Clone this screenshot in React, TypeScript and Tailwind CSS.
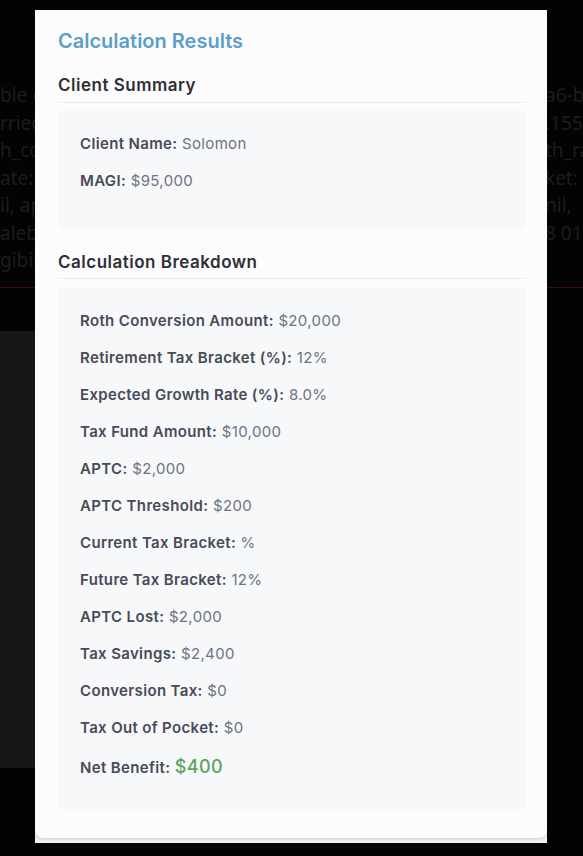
import React from "react";

const bgLines: [string, string][] = [
  ["ble of", "a6-b"],
  ["rried", ".1555"],
  ["h_co", "th_ra"],
  ["ate: ", "ket: r"],
  ["il, ap", " nil,"],
  ["aleb'", "8 01"],
  ["gibili", ""],
];

const summary = [
  { label: "Client Name", value: "Solomon" },
  { label: "MAGI", value: "$95,000" },
];

const breakdown = [
  { label: "Roth Conversion Amount", value: "$20,000" },
  { label: "Retirement Tax Bracket (%)", value: "12%" },
  { label: "Expected Growth Rate (%)", value: "8.0%" },
  { label: "Tax Fund Amount", value: "$10,000" },
  { label: "APTC", value: "$2,000" },
  { label: "APTC Threshold", value: "$200" },
  { label: "Current Tax Bracket", value: "%" },
  { label: "Future Tax Bracket", value: "12%" },
  { label: "APTC Lost", value: "$2,000" },
  { label: "Tax Savings", value: "$2,400" },
  { label: "Conversion Tax", value: "$0" },
  { label: "Tax Out of Pocket", value: "$0" },
];

function Row({ label, value }: { label: string; value: string }) {
  return (
    <p className="h-[22px] mb-[15px] leading-[22px] text-[15px] tracking-[0.35px]">
      <span className="font-semibold text-[#464b58]">{label}:</span>{" "}
      <span className="text-[#6b7385]">{value}</span>
    </p>
  );
}

function SectionHeading({ children }: { children: React.ReactNode }) {
  return (
    <h3 className="h-[24px] leading-[24px] box-content pb-[5px] text-[17px] tracking-[0.5px] font-semibold text-[#2d2f36] border-b border-[#e9ecef]">
      {children}
    </h3>
  );
}

export default function App() {
  return (
    <div
      className="relative h-[856px] w-full overflow-hidden bg-[#030303]"
      style={{ fontFamily: "Inter, 'Noto Sans', sans-serif" }}
    >
      {/* page behind the modal */}
      <div className="pt-[82px]" style={{ fontFamily: "'Noto Sans', sans-serif" }}>
        {bgLines.map(([l, r], i) => (
          <div key={i} className="flex justify-between h-[27.5px] leading-[27.5px] text-[19px] text-[#1d1d1d] whitespace-nowrap">
            <span>{l}</span>
            <span className="w-[38px] overflow-hidden">{r}</span>
          </div>
        ))}
      </div>
      <div className="mt-[12px] h-px bg-[#3a0b12]" />
      <div className="mt-[43px] h-[437px] w-[500px] bg-[#161616]" />

      {/* modal */}
      <div className="absolute left-[35px] top-[10px] w-[512px] h-[833px] bg-[#f4f4f5]">
        <div className="bg-[#fcfcfd] rounded-b-lg shadow-[0_2px_3px_rgba(0,0,0,0.12)] pl-[23px] pr-[21px] pt-[18px] pb-[28px]">
          <h2 className="h-[26px] leading-[26px] text-[20px] font-semibold text-[#5b9fc9] mb-[19px]">
            Calculation Results
          </h2>

          <SectionHeading>Client Summary</SectionHeading>
          <div className="mt-[7px] rounded-md bg-[#f7f8fa] px-[22px] pt-[23px] pb-[21px]">
            {summary.map((r) => (
              <Row key={r.label} {...r} />
            ))}
          </div>

          <div className="mt-[22px]">
            <h3 className="h-[24px] leading-[24px] box-content pb-[4px] text-[17px] tracking-[0.5px] font-semibold text-[#2d2f36] border-b border-[#e9ecef]">
              Calculation Breakdown
            </h3>
          </div>
          <div className="mt-[8px] rounded-md bg-[#f7f8fa] px-[22px] pt-[23px] pb-[21px]">
            {breakdown.map((r) => (
              <Row key={r.label} {...r} />
            ))}
            <p className="h-[26px] leading-[26px] mb-[9px] text-[15px] tracking-[0.35px]">
              <span className="font-semibold text-[#464b58]">Net Benefit:</span>{" "}
              <span className="text-[18px] font-medium text-[#5aa35e]">$400</span>
            </p>
          </div>
        </div>
      </div>
    </div>
  );
}
